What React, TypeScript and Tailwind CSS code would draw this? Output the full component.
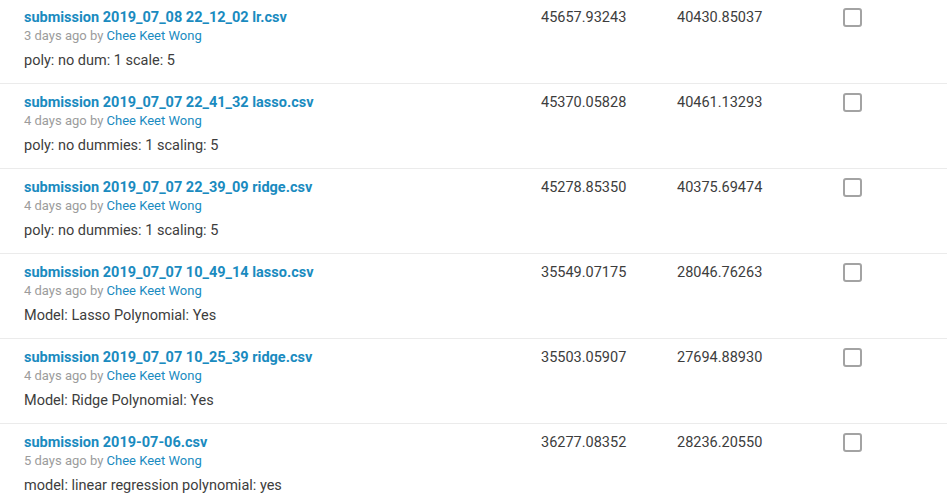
import React from 'react';

type Submission = {
  name: string;
  ago: string;
  description: string;
  privateScore: string;
  publicScore: string;
};

const submissions: Submission[] = [
  { name: 'submission 2019_07_08 22_12_02 lr.csv', ago: '3 days ago', description: 'poly: no dum: 1 scale: 5', privateScore: '45657.93243', publicScore: '40430.85037' },
  { name: 'submission 2019_07_07 22_41_32 lasso.csv', ago: '4 days ago', description: 'poly: no dummies: 1 scaling: 5', privateScore: '45370.05828', publicScore: '40461.13293' },
  { name: 'submission 2019_07_07 22_39_09 ridge.csv', ago: '4 days ago', description: 'poly: no dummies: 1 scaling: 5', privateScore: '45278.85350', publicScore: '40375.69474' },
  { name: 'submission 2019_07_07 10_49_14 lasso.csv', ago: '4 days ago', description: 'Model: Lasso Polynomial: Yes', privateScore: '35549.07175', publicScore: '28046.76263' },
  { name: 'submission 2019_07_07 10_25_39 ridge.csv', ago: '4 days ago', description: 'Model: Ridge Polynomial: Yes', privateScore: '35503.05907', publicScore: '27694.88930' },
  { name: 'submission 2019-07-06.csv', ago: '5 days ago', description: 'model: linear regression polynomial: yes', privateScore: '36277.08352', publicScore: '28236.20550' },
];

function SubmissionRow({ s }: { s: Submission }) {
  return (
    <div className="grid grid-cols-[541px_136px_166px_1fr] h-[85px] border-b border-[#ebebeb]">
      <div className="pl-6 pt-[9px]">
        <a href="#" className="block text-[14.5px] leading-5 font-bold text-[#1a8bbf]">
          {s.name}
        </a>
        <div className="text-[13px] leading-4 text-[#9c9c9c]">
          {s.ago} by <a href="#" className="text-[#1a8bbf]">Chee Keet Wong</a>
        </div>
        <p className="text-[14.5px] leading-5 mt-[7px] text-[#3d3d3d]">{s.description}</p>
      </div>
      <div className="pt-[9px] text-[14.5px] leading-5 text-[#3d3d3d]">{s.privateScore}</div>
      <div className="pt-[9px] text-[14.5px] leading-5 text-[#3d3d3d]">{s.publicScore}</div>
      <div className="pt-[9px]">
        <div className="w-[19px] h-[19px] rounded-[3px] border-2 border-[#a3a3a3] bg-white" />
      </div>
    </div>
  );
}

export default function App() {
  return (
    <div className="w-[947px] h-[499px] overflow-hidden bg-white font-['Roboto',Arial,sans-serif]">
      <div className="-mt-px">
        {submissions.map((s) => (
          <SubmissionRow key={s.name} s={s} />
        ))}
      </div>
    </div>
  );
}
